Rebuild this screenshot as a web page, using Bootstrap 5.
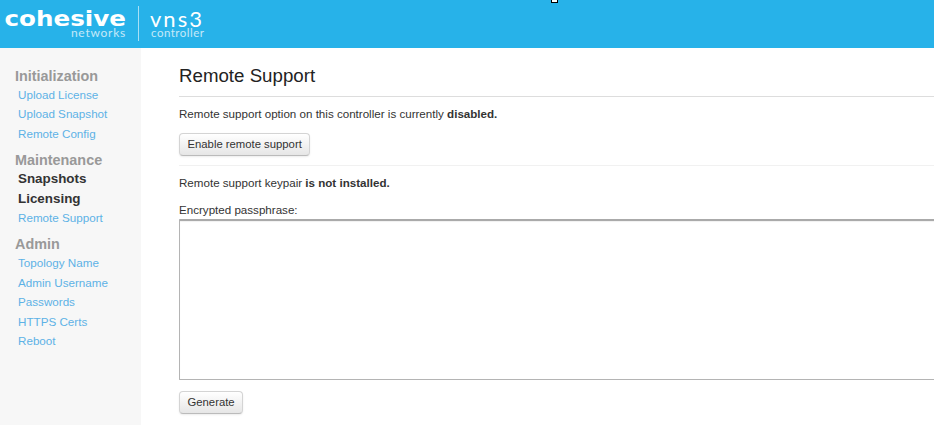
<!DOCTYPE html>
<html lang="en">
<head>
<meta charset="utf-8">
<title>Remote Support</title>
<link href="https://cdn.jsdelivr.net/npm/bootstrap@5.3.0/dist/css/bootstrap.min.css" rel="stylesheet">
<style>
html,body{height:425px;overflow:hidden}
body{font-family:"Liberation Sans",Arial,sans-serif;font-size:11.6px;line-height:19.5px;color:#333;background:#fff}
.topbar{height:48px;background:#27b2e9;color:#fff;position:relative;padding-left:5px}
.drag-handle{position:absolute;left:551px;top:-3px;width:7px;height:6px;background:#fff;border:1px solid #000}
.brand-stack{width:121px;text-align:right;line-height:1}
.brand-name{display:block;font-family:"DejaVu Sans",sans-serif;font-weight:700;font-size:20.5px;line-height:14px;height:14px;transform:scaleX(1.2);transform-origin:right center;white-space:nowrap;margin-top:12px}
.brand-sub{display:block;font-family:Lato,sans-serif;font-size:12px;line-height:11px;letter-spacing:.75px;margin-top:1px;opacity:.72}
.brand-rule{width:1px;height:35px;background:rgba(255,255,255,.6);margin:6px 11px 0 12px}
.product-name{display:block;font-family:Lato,sans-serif;font-size:22px;line-height:15px;height:15px;letter-spacing:2px;margin-top:11px}
.product-sub{display:block;font-family:Lato,sans-serif;font-size:11.5px;line-height:11px;letter-spacing:.5px;margin:1px 0 0 1px;opacity:.72}
.shell{height:377px;overflow:hidden}
.side{width:141px;flex:none;background:#f7f7f7;padding:18px 0 0 15px}
.side-head{font-size:14.4px;font-weight:700;color:#999;line-height:21px;height:19px;margin:0}
.side-list{list-style:none;margin:0 0 7px;padding:0 0 0 3px;font-size:11.65px}
.side-list li{line-height:19.4px;height:19.4px}
.side-list a{color:#5db2e6;text-decoration:none}
.side-list .current{color:#333;font-size:13.4px;font-weight:700}
.content{flex:1 1 auto;min-width:0;padding:0 0 0 38px;margin-right:-4px}
.page-title{font-size:18.7px;font-weight:400;color:#222;line-height:24px;margin:16px 0 0;padding-bottom:8px;border-bottom:1px solid #ddd}
.note{margin:7px 0 9px;color:#333}
.soft-btn{display:block;font-size:11.3px;line-height:16px;color:#333;padding:2px 7.5px 4px;height:23px;border:1px solid #d4d4d4;border-bottom-color:#bbb;border-radius:4px;background:linear-gradient(#fff,#e6e6e6);box-shadow:0 1px 2px rgba(0,0,0,.08)}
.soft-rule{border:0;border-top:1px solid #f1f1f1;margin:9px 0 7px;opacity:1}
.pass-label{display:block;margin:8px 0 0;line-height:19px;height:19px}
.pass-area{display:block;width:100%;height:161px;border:1px solid #b4b4b4;border-top:2px solid #aaa;border-radius:1px;resize:none;background:#fff;box-shadow:inset 0 1px 1px rgba(0,0,0,.06)}
.gen-btn{margin-top:11px}
</style>
</head>
<body>
<header class="topbar d-flex align-items-start">
  <div class="brand-stack">
    <span class="brand-name">cohesive</span>
    <span class="brand-sub">networks</span>
  </div>
  <div class="brand-rule"></div>
  <div>
    <span class="product-name">vns3</span>
    <span class="product-sub">controller</span>
  </div>
  <span class="drag-handle"></span>
</header>
<div class="shell d-flex">
  <nav class="side">
    <h6 class="side-head">Initialization</h6>
    <ul class="side-list">
      <li><a href="#">Upload License</a></li>
      <li><a href="#">Upload Snapshot</a></li>
      <li><a href="#">Remote Config</a></li>
    </ul>
    <h6 class="side-head">Maintenance</h6>
    <ul class="side-list">
      <li class="current">Snapshots</li>
      <li class="current">Licensing</li>
      <li><a href="#">Remote Support</a></li>
    </ul>
    <h6 class="side-head">Admin</h6>
    <ul class="side-list">
      <li><a href="#">Topology Name</a></li>
      <li><a href="#">Admin Username</a></li>
      <li><a href="#">Passwords</a></li>
      <li><a href="#">HTTPS Certs</a></li>
      <li><a href="#">Reboot</a></li>
    </ul>
  </nav>
  <main class="content">
    <h1 class="page-title">Remote Support</h1>
    <p class="note">Remote support option on this controller is currently <b>disabled.</b></p>
    <button type="button" class="soft-btn">Enable remote support</button>
    <hr class="soft-rule">
    <p class="note mb-0">Remote support keypair <b>is not installed.</b></p>
    <label class="pass-label" for="pp">Encrypted passphrase:</label>
    <textarea id="pp" class="pass-area"></textarea>
    <button type="button" class="soft-btn gen-btn">Generate</button>
  </main>
</div>
<script src="https://cdn.jsdelivr.net/npm/bootstrap@5.3.0/dist/js/bootstrap.bundle.min.js"></script>
</body>
</html>
